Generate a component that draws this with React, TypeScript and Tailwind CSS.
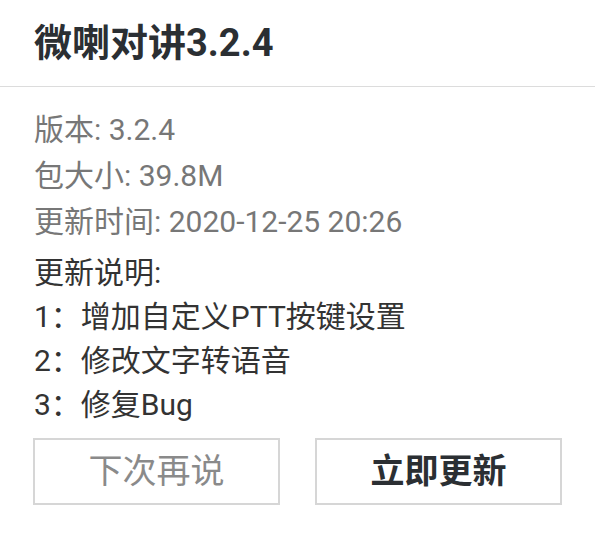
import React from 'react';

const font = "font-['Roboto','Noto_Sans_CJK_SC',sans-serif]";

export default function App() {
  const info = ['版本: 3.2.4', '包大小: 39.8M', '更新时间: 2020-12-25 20:26'];
  const notes = ['1：增加自定义PTT按键设置', '2：修改文字转语音', '3：修复Bug'];

  return (
    <div className={`w-[595px] h-[539px] bg-white ${font}`}>
      {/* Header */}
      <div className="h-[87px] flex items-center px-[34px] border-b border-[#dcdcdc]">
        <h1 className="text-[38px] font-bold text-[#2b2f33] leading-none">微喇对讲3.2.4</h1>
      </div>

      {/* Body */}
      <div className="px-[34px] pt-[20px]">
        <div className="text-[30px] leading-[46px] text-[#777777]">
          {info.map((line, i) => (
            <p key={i}>{line}</p>
          ))}
        </div>

        <div className="mt-[6px] text-[30px] leading-[44px] text-[#333333]">
          <p>更新说明:</p>
          {notes.map((line, i) => (
            <p key={i}>{line}</p>
          ))}
        </div>
      </div>

      {/* Actions */}
      <div className="px-[33px] mt-[11px] grid grid-cols-2 gap-[35px]">
        <button className="h-[67px] border-2 border-[#d6d6d6] text-[34px] text-[#8a8a8a]">
          下次再说
        </button>
        <button className="h-[67px] border-2 border-[#d6d6d6] text-[34px] font-bold text-[#2b2f33]">
          立即更新
        </button>
      </div>
    </div>
  );
}
